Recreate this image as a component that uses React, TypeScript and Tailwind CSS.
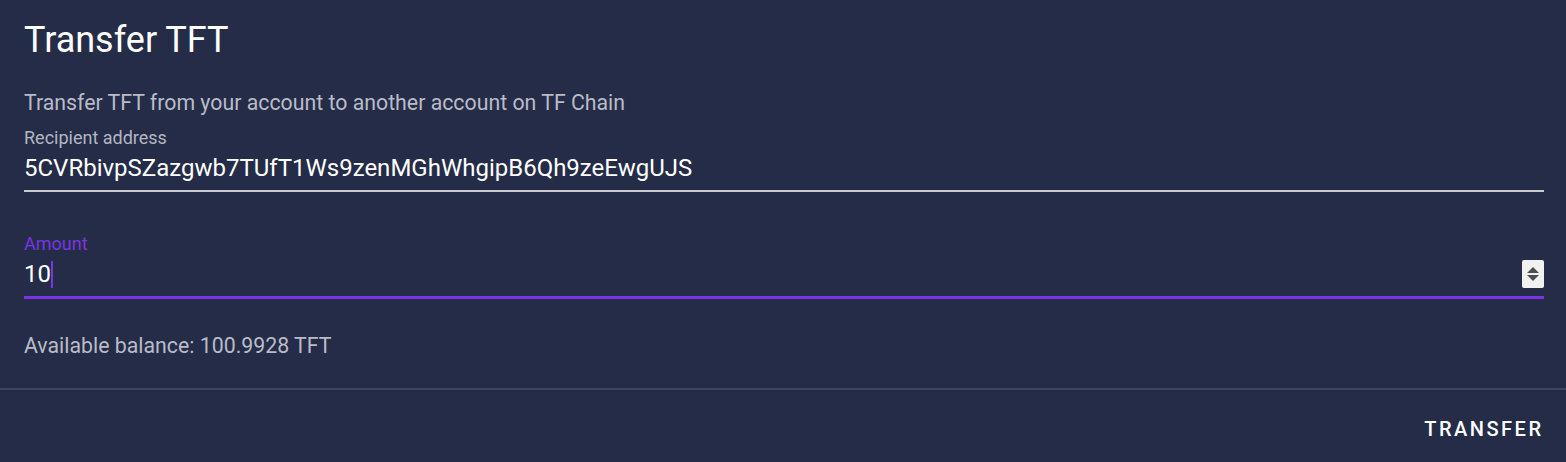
import React from "react";

export default function App() {
  return (
    <div className="w-[1566px] h-[462px] bg-[#252c47] text-white overflow-hidden" style={{ fontFamily: "Roboto, sans-serif" }}>
      <div className="pl-6 pr-[22px] pt-[18px]">
        <h1 className="text-[36px] leading-[44px] font-normal text-white">Transfer TFT</h1>
        <p className="mt-[29px] text-[21.3px] leading-[24px] text-[#b9bcc8]">Transfer TFT from your account to another account on TF Chain</p>
        <div className="mt-[13px]">
          <div className="text-[18px] leading-[20px] text-[#b3b6c2]">Recipient address</div>
          <div className="text-[24px] leading-[30px] text-white mt-[5px]">5CVRbivpSZazgwb7TUfT1Ws9zenMGhWhgipB6Qh9zeEwgUJS</div>
          <div className="h-[2px] bg-[#c9cad0] mt-[7px]" />
        </div>
        <div className="mt-[42px]">
          <div className="text-[18px] leading-[20px] text-[#7b34e4]">Amount</div>
          <div className="flex items-center justify-between mt-[5px] h-[30px]">
            <div className="flex items-center text-[24px] leading-[30px] text-white">
              10<span className="inline-block w-[2px] h-[27px] bg-[#7b34e4]" />
            </div>
            <div className="w-[22px] h-[28px] bg-[#f1f1f1] rounded-[2px] flex flex-col items-center justify-center gap-[2px]">
              <div className="w-0 h-0 border-l-[6px] border-r-[6px] border-b-[6px] border-l-transparent border-r-transparent border-b-[#4d4d4d]" />
              <div className="w-0 h-0 border-l-[6px] border-r-[6px] border-t-[6px] border-l-transparent border-r-transparent border-t-[#4d4d4d]" />
            </div>
          </div>
          <div className="h-[3px] bg-[#7b34e4] mt-[7px]" />
        </div>
        <div className="mt-[35px] text-[21.3px] leading-[24px] text-[#b9bcc8]">Available balance: 100.9928 TFT</div>
      </div>
      <div className="mt-[30px] h-[2px] bg-[#3d4359]" />
      <div className="flex justify-end pr-6 pt-[29px]">
        <button className="text-[20px] leading-[20px] font-medium tracking-[2.5px] text-white uppercase mr-[-1.5px]">Transfer</button>
      </div>
    </div>
  );
}
